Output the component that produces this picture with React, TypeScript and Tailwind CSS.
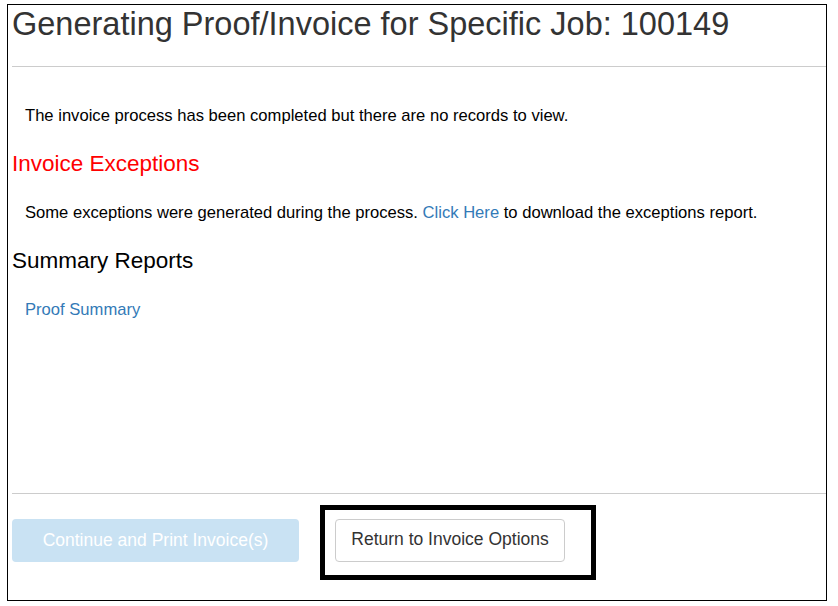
import React from "react";

const App: React.FC = () => {
  return (
    <div className="w-[838px] h-[606px] bg-white pt-[4px] pl-[7px] font-['Liberation_Sans',Arial,sans-serif]">
      <div className="w-[820px] h-[597px] border border-black flex flex-col">
        {/* HEADER */}
        <h1 className="pl-[4px] pt-[1px] text-[32.5px] leading-[36px] text-[#333333]">
          Generating Proof/Invoice for Specific Job: 100149
        </h1>
        <hr className="ml-[4px] mt-[24px] border-t border-[#cccccc]" />

        {/* BODY */}
        <div className="flex-1 pl-[4px]">
          <p className="mt-[39px] pl-[13px] text-[16.6px] leading-[20px] text-black">
            The invoice process has been completed but there are no records to view.
          </p>
          <h2 className="mt-[25px] text-[22.5px] leading-[26px] text-[#ff0000]">
            Invoice Exceptions
          </h2>
          <p className="mt-[26px] pl-[13px] text-[16.6px] leading-[20px] text-black">
            Some exceptions were generated during the process.{" "}
            <a className="text-[#337ab7]">Click Here</a> to download the exceptions report.
          </p>
          <h2 className="mt-[25px] text-[22.5px] leading-[26px] text-black">
            Summary Reports
          </h2>
          <p className="mt-[26px] pl-[13px] text-[16.6px] leading-[20px]">
            <a className="text-[#337ab7]">Proof Summary</a>
          </p>
        </div>

        {/* FOOTER */}
        <hr className="ml-[4px] border-t border-[#cccccc]" />
        <div className="flex items-start pl-[4px] pt-[11px] pb-[20px]">
          <button
            disabled
            className="mt-[14px] w-[287px] h-[43px] rounded-[4px] bg-[#c9e2f3] text-white text-[17.5px]"
          >
            Continue and Print Invoice(s)
          </button>
          <div className="ml-[21px] border-[5px] border-black pl-[10px] pr-[26px] pt-[9px] pb-[13px]">
            <button className="w-[230px] h-[43px] pb-[2px] rounded-[4px] border border-[#cccccc] bg-white text-[17.5px] text-[#333333]">
              Return to Invoice Options
            </button>
          </div>
        </div>
      </div>
    </div>
  );
};

export default App;
